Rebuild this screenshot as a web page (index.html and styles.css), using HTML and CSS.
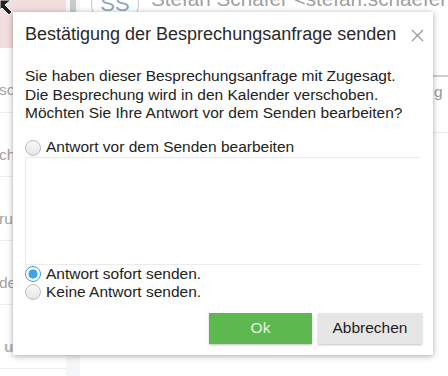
FILE: index.html
```html
<!DOCTYPE html>
<html lang="de">
<head>
<meta charset="utf-8">
<title>Bestätigung</title>
<link rel="stylesheet" href="styles.css">
</head>
<body>
<div class="app">
  <div class="sidebar">
    <div class="sel"></div>
    <div class="item first"><span>sch</span></div>
    <div class="item"><span>che</span></div>
    <div class="item"><span>ru</span></div>
    <div class="item"><span>de</span></div>
    <div class="item"><span class="last">usw</span></div>
  </div>
  <div class="scroll"><div class="thumb"></div></div>
  <div class="main">
    <div class="head">
      <div class="avatar">SS</div>
      <div class="sender">Stefan Schäfer &lt;stefan.schaefer@example.de&gt;</div>
    </div>
    <div class="meta">g 12:00</div>
  </div>
</div>

<svg class="cursor" width="14" height="16" viewBox="0 0 14 16"><polygon points="0,0 11,0 5,5 12,12 9,15 2,8 0,10" fill="#222" stroke="#fff" stroke-width="1"/></svg>

<div class="dialog">
  <div class="dlg-head">
    <h2 class="title">Bestätigung der Besprechungsanfrage senden</h2>
    <svg class="close" width="13" height="13" viewBox="0 0 13 13"><path d="M1 1 L12 12 M12 1 L1 12" stroke="#9a9a9a" stroke-width="1.3" fill="none"/></svg>
  </div>
  <p class="msg">Sie haben dieser Besprechungsanfrage mit Zugesagt.<br>Die Besprechung wird in den Kalender verschoben.<br>Möchten Sie Ihre Antwort vor dem Senden bearbeiten?</p>
  <div class="radio"><span class="dot"></span>Antwort vor dem Senden bearbeiten</div>
  <div class="textarea"></div>
  <div class="radio"><span class="dot on"></span>Antwort sofort senden.</div>
  <div class="radio"><span class="dot"></span>Keine Antwort senden.</div>
  <div class="actions">
    <button class="btn ok">Ok</button>
    <button class="btn cancel">Abbrechen</button>
  </div>
</div>
</body>
</html>
```
FILE: styles.css
```css
html, body {
  margin: 0;
  padding: 0;
  width: 448px;
  height: 376px;
  overflow: hidden;
  background: #fff;
  font-family: "Liberation Sans", Arial, sans-serif;
}
.app {
  display: flex;
  height: 376px;
}
.sidebar {
  width: 66px;
  flex: none;
  overflow: hidden;
}
.sel {
  height: 48px;
  background: #f2dede;
}
.item {
  height: 64px;
  box-sizing: border-box;
  border-bottom: 1px solid #ececec;
  padding-top: 33px;
  color: #a3a3a3;
  font-size: 15.5px;
  line-height: 18px;
  white-space: nowrap;
}
.item.first { height: 65px; }
.item span { display: block; margin-left: -1px; }
.item span.last { margin-left: 4px; font-weight: bold; color: #b4b4b4; }
.scroll {
  width: 14px;
  flex: none;
  background: #f5f6f7;
  padding-left: 4px;
  box-sizing: border-box;
}
.thumb {
  width: 6px;
  height: 20px;
  background: #c9c9c9;
}
.main {
  flex: 1;
  overflow: hidden;
}
.head {
  height: 75px;
  border-bottom: 2px solid #cfcfcf;
  display: flex;
  align-items: flex-start;
  gap: 12px;
  padding-left: 11px;
}
.avatar {
  width: 46px;
  height: 46px;
  margin-top: -20px;
  border: 1.5px solid #b9c9d9;
  border-radius: 50%;
  color: #8fa7c0;
  font-size: 22px;
  display: flex;
  align-items: center;
  justify-content: center;
  flex: none;
}
.sender {
  margin-top: -13px;
  color: #a0a0a0;
  font-size: 20.7px;
  white-space: nowrap;
}
.meta {
  height: 56px;
  border-bottom: 1px solid #ededed;
  padding-left: 354px;
  padding-top: 6px;
  box-sizing: border-box;
  color: #9a9a9a;
  font-size: 15.5px;
  white-space: nowrap;
}
.cursor {
  position: absolute;
  left: 0;
  top: 0;
}
.dialog {
  position: absolute;
  left: 13px;
  top: 12px;
  width: 420px;
  height: 343px;
  box-sizing: border-box;
  padding: 12px 12px 0 12px;
  background: #fff;
  box-shadow: 0 1px 6px rgba(0, 0, 0, 0.35);
  color: #222;
}
.dlg-head {
  display: flex;
  align-items: center;
  justify-content: space-between;
}
.title {
  margin: 0;
  font-weight: normal;
  font-size: 18px;
  line-height: 20.7px;
  color: #2a2a2a;
}
.close {
  margin-right: -3px;
  margin-top: 2px;
}
.msg {
  margin: 22.5px 0 0 0;
  font-size: 15.5px;
  line-height: 18.4px;
}
.radio {
  display: flex;
  align-items: center;
  font-size: 15.5px;
  line-height: 18.4px;
  height: 18.4px;
}
.msg + .radio { margin-top: 16px; }
.dot {
  width: 16px;
  height: 16px;
  box-sizing: border-box;
  border: 1px solid #bdbdbd;
  border-radius: 50%;
  background: linear-gradient(#fafafa, #e4e4e4);
  margin-right: 5px;
  flex: none;
}
.dot.on {
  border: 1.5px solid #3b9fe6;
  background: radial-gradient(circle, #3aa4ee 0 4.3px, #fff 4.8px);
}
.textarea {
  height: 108px;
  box-sizing: border-box;
  border: 1px solid #ebebeb;
  border-right: none;
}
.actions {
  margin-top: 11px;
  display: flex;
  justify-content: flex-end;
  gap: 6px;
  margin-right: -1px;
}
.btn {
  height: 31px;
  border: none;
  font-family: "Liberation Sans", Arial, sans-serif;
  font-size: 15.5px;
  padding: 0;
  box-shadow: 0 1px 2px rgba(0, 0, 0, 0.25);
}
.ok {
  width: 103px;
  background: #5cb84f;
  color: #e6f4e3;
}
.cancel {
  width: 104px;
  background: #e6e6e6;
  color: #1e1e1e;
}
```
